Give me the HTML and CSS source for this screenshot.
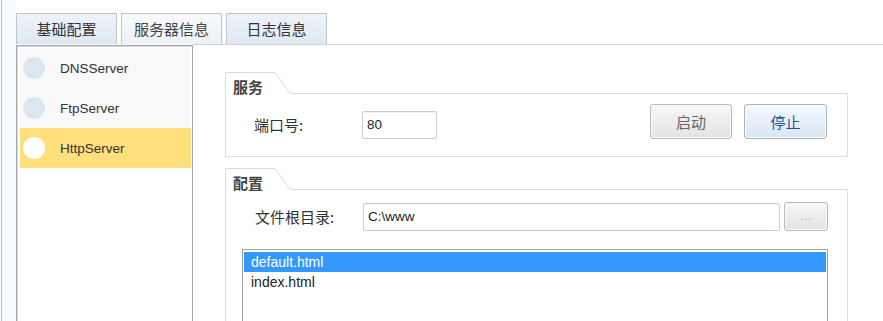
FILE: index.html
```html
<!DOCTYPE html>
<html lang="zh-CN">
<head>
<meta charset="utf-8">
<title>服务器信息</title>
<link rel="stylesheet" href="styles.css">
</head>
<body>
<div class="app">
  <div class="rail"></div>
  <div class="main">
    <div class="tabs">
      <div class="tab">基础配置</div>
      <div class="tab tab-active">服务器信息</div>
      <div class="tab">日志信息</div>
    </div>
    <div class="content">
      <div class="server-list">
        <div class="server"><span class="dot"></span><span class="server-name">DNSServer</span></div>
        <div class="server"><span class="dot"></span><span class="server-name">FtpServer</span></div>
        <div class="server server-selected"><span class="dot"></span><span class="server-name">HttpServer</span></div>
      </div>
      <div class="pane">
        <div class="group">
          <div class="group-head">
            <div class="group-title">服务</div>
            <svg class="slant" width="15" height="22" viewBox="0 0 15 22"><line x1="0" y1="0.5" x2="15" y2="21.5" stroke="#dcdcdc" stroke-width="1"/></svg>
            <div class="group-fill"></div>
          </div>
          <div class="group-body service-body">
            <div class="field-label">端口号:</div>
            <div class="input port-input">80</div>
            <div class="spacer"></div>
            <div class="btn">启动</div>
            <div class="btn btn-blue">停止</div>
          </div>
        </div>
        <div class="group group-config">
          <div class="group-head">
            <div class="group-title">配置</div>
            <svg class="slant" width="15" height="22" viewBox="0 0 15 22"><line x1="0" y1="0.5" x2="15" y2="21.5" stroke="#dcdcdc" stroke-width="1"/></svg>
            <div class="group-fill"></div>
          </div>
          <div class="group-body config-body">
            <div class="config-row">
              <div class="field-label">文件根目录:</div>
              <div class="input path-input">C:\www</div>
              <div class="btn btn-small">...</div>
            </div>
            <div class="listbox">
              <div class="list-row list-row-selected">default.html</div>
              <div class="list-row">index.html</div>
            </div>
          </div>
        </div>
      </div>
    </div>
  </div>
</div>
</body>
</html>
```
FILE: styles.css
```css
* { box-sizing: border-box; }
html, body {
  margin: 0;
  padding: 0;
  background: #ffffff;
  overflow: hidden;
}
body {
  width: 883px;
  height: 321px;
  font-family: "Liberation Sans", "Noto Sans CJK SC", sans-serif;
  color: #333;
}
.app {
  display: flex;
  height: 321px;
  overflow: hidden;
}
.rail {
  width: 15px;
  margin-left: 1px;
  flex: none;
  border-left: 1px solid #b9bec5;
  background: #f6f9fd;
}
.main {
  flex: 1;
  display: flex;
  flex-direction: column;
  min-width: 0;
}
.tabs {
  display: flex;
  gap: 4px;
  margin-top: 13px;
  height: 31px;
  flex: none;
  background: #ffffff;
}
.tab {
  width: 101px;
  height: 31px;
  border: 1px solid #bcc5cf;
  border-bottom: none;
  background: linear-gradient(#eef3f9, #dfe8f2);
  font-family: "Noto Sans CJK SC", sans-serif;
  font-size: 15px;
  line-height: 30px;
  text-align: center;
  color: #333;
}
.tab-active {
  background: linear-gradient(#f7f9fc, #edf2f8);
  color: #444;
}
.content {
  flex: 1;
  display: flex;
  min-height: 0;
  overflow: hidden;
}
.server-list {
  width: 177px;
  flex: none;
  margin-top: 1px;
  border: 1px solid #a2a7ae;
  border-bottom: none;
  box-shadow: inset 1px 1px 0 #d6dae0;
  padding: 2px 1px 0 3px;
  background: #ffffff;
}
.server {
  height: 40px;
  display: flex;
  align-items: center;
  background: #f9f9f9;
}
.dot {
  width: 22px;
  height: 22px;
  border-radius: 50%;
  background: #dee7f1;
  margin-left: 3px;
  flex: none;
}
.server-name {
  margin-left: 15px;
  font-size: 13.5px;
  color: #333;
}
.server-selected {
  background: #fedf7b;
}
.server-selected .dot {
  background: #ffffff;
}
.pane {
  flex: 1;
  border-top: 1px solid #cfcfcf;
  padding: 27px 0 0 32px;
  overflow: hidden;
}
.group {
  width: 623px;
}
.group-config {
  margin-top: 11px;
}
.group-head {
  display: flex;
  height: 22px;
}
.group-title {
  width: 50px;
  border-top: 1px solid #dcdcdc;
  border-left: 1px solid #dcdcdc;
  font-family: "Noto Sans CJK SC", sans-serif;
  font-weight: bold;
  font-size: 15px;
  line-height: 28px;
  padding-left: 7px;
  color: #444;
}
.slant {
  display: block;
  flex: none;
}
.group-fill {
  flex: 1;
  border-bottom: 1px solid #dcdcdc;
}
.group-body {
  border-left: 1px solid #dcdcdc;
  border-right: 1px solid #dcdcdc;
  border-bottom: 1px solid #dcdcdc;
}
.service-body {
  display: flex;
  align-items: flex-end;
  padding: 10px 20px 17px 28px;
}
.field-label {
  width: 108px;
  height: 28px;
  line-height: 28px;
  font-family: "Noto Sans CJK SC", sans-serif;
  font-size: 15px;
  color: #333;
  flex: none;
}
.input {
  height: 28px;
  border: 1px solid #c9cdd3;
  border-radius: 2px;
  box-shadow: inset 0 1px 0 #eef1f5;
  padding-left: 4px;
  font-size: 13.5px;
  line-height: 26px;
  color: #222;
  background: #fff;
}
.port-input {
  width: 75px;
}
.spacer {
  flex: 1;
}
.btn {
  width: 82px;
  height: 35px;
  border: 1px solid #b9b9b9;
  border-radius: 3px;
  background: linear-gradient(#f7f7f7, #e3e3e3);
  box-shadow: inset 0 0 0 1px #fbfbfb;
  font-family: "Noto Sans CJK SC", sans-serif;
  font-size: 15px;
  line-height: 33px;
  text-align: center;
  color: #666;
  flex: none;
}
.btn + .btn {
  margin-left: 12px;
}
.btn-blue {
  width: 83px;
  border-color: #a8b4c2;
  background: linear-gradient(#f5f9fd, #d8e6f4);
  color: #1f5590;
}
.config-body {
  padding: 12px 19px 0 16px;
  height: 150px;
}
.config-row {
  display: flex;
  align-items: center;
  padding-left: 13px;
}
.path-input {
  width: 417px;
}
.btn-small {
  width: 44px;
  height: 29px;
  margin-left: 4px;
  line-height: 26px;
  font-family: "Liberation Sans", sans-serif;
  font-size: 11px;
  letter-spacing: 1px;
  color: #aaa;
}
.listbox {
  margin-top: 18px;
  width: 586px;
  height: 100px;
  border: 1px solid #a3a3a3;
  padding: 2px 1px;
  background: #fff;
}
.list-row {
  height: 20px;
  line-height: 20px;
  padding-left: 7px;
  font-size: 14px;
  color: #222;
}
.list-row-selected {
  background: #3399ff;
  color: #ffffff;
}
```
